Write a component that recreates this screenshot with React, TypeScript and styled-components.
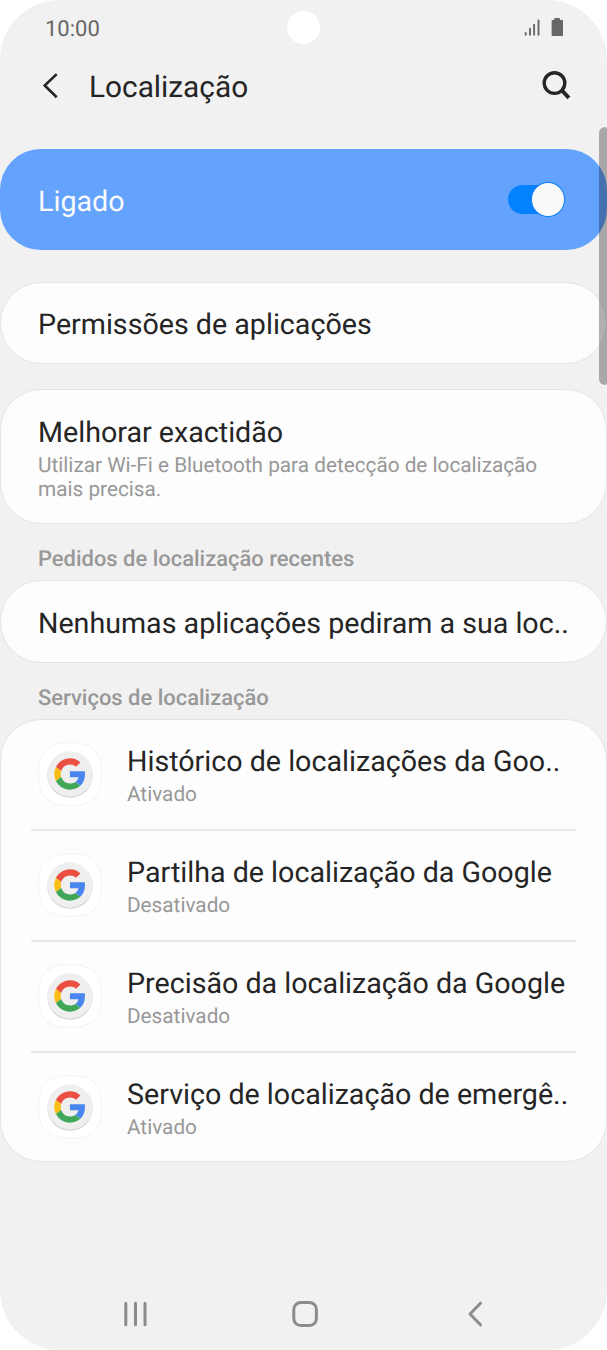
import React from "react";
import styled, { createGlobalStyle } from "styled-components";

const GlobalStyle = createGlobalStyle`
  html, body { margin: 0; padding: 0; background: #fff; }
  * { box-sizing: border-box; }
`;

const Screen = styled.div`
  position: relative;
  display: flex;
  flex-direction: column;
  width: 607px;
  height: 1350px;
  overflow: hidden;
  border-radius: 60px;
  background: #f1f1f1;
  color: #252525;
  font-family: Roboto, "Liberation Sans", sans-serif;
  text-rendering: geometricPrecision;
`;

const StatusBar = styled.div`
  display: flex;
  align-items: center;
  justify-content: space-between;
  height: 56px;
  padding: 0 43px 0 45px;
`;

const Clock = styled.span`
  padding-top: 3px;
  font-size: 22px;
  line-height: 26px;
  color: #666;
`;

const Camera = styled.div`
  position: absolute;
  left: 287px;
  top: 11px;
  width: 33.4px;
  height: 33.4px;
  border-radius: 50%;
  background: #fff;
`;

const TitleBar = styled.header`
  display: flex;
  align-items: center;
  height: 60px;
  padding: 0 35px 0 40px;
`;

const Title = styled.h1`
  flex: 1;
  margin: 3px 0 0 29px;
  font-size: 29.8px;
  font-weight: 400;
  line-height: 36px;
`;

const Content = styled.main`
  display: flex;
  flex-direction: column;
  flex: 1;
  padding-top: 33px;
`;

const Banner = styled.section`
  display: flex;
  align-items: center;
  justify-content: space-between;
  height: 101px;
  margin-bottom: 32px;
  padding: 2px 42px 0 38px;
  border-radius: 41px;
  background: #63a3fd;
  color: #fafafa;
`;

const Card = styled.section<{ $height: number; $gap?: number }>`
  display: flex;
  flex-direction: column;
  justify-content: center;
  height: ${(p) => p.$height}px;
  margin-bottom: ${(p) => p.$gap ?? 0}px;
  padding: 2px 30px 0 37px;
  border: 1px solid #e4e4e4;
  border-radius: 41px;
  background: #fdfdfd;
`;

const Label = styled.div`
  font-size: 28.65px;
  line-height: 36px;
  white-space: nowrap;
`;

const Note = styled.div<{ $lineHeight?: number; $top?: number }>`
  margin-top: ${(p) => p.$top ?? 0}px;
  font-size: 20.75px;
  line-height: ${(p) => p.$lineHeight ?? 24}px;
  white-space: nowrap;
  color: #989898;
`;

const SectionTitle = styled.h2<{ $height: number }>`
  height: ${(p) => p.$height}px;
  margin: 0;
  padding: 22px 38px 0;
  font-size: 21.95px;
  font-weight: 500;
  line-height: 28px;
  color: #989898;
`;

const Track = styled.span`
  display: flex;
  align-items: center;
  justify-content: flex-end;
  width: 57.5px;
  height: 29px;
  margin-top: -2px;
  border-radius: 15px;
  background: #0381fe;
`;

const Thumb = styled.span`
  flex: none;
  width: 34.5px;
  height: 35px;
  border: 1.5px solid #0b7ff3;
  border-radius: 50%;
  background: #fafafa;
`;

const ServiceList = styled.ul`
  height: 443px;
  margin: 0;
  padding: 0 30px;
  list-style: none;
  border: 1px solid #e4e4e4;
  border-radius: 41px;
  background: #fdfdfd;
`;

const ServiceRow = styled.li`
  display: flex;
  align-items: flex-start;
  gap: 25px;
  height: 111px;
  padding: 22px 0 0 7px;
  border-bottom: 2px solid #e8e8e8;

  &:last-child {
    border-bottom: none;
  }

  > svg {
    flex: none;
  }
`;

const ServiceText = styled.div`
  padding-top: 1px;
`;

const NavBar = styled.nav`
  display: flex;
  align-items: center;
  justify-content: space-between;
  height: 72px;
  padding: 0 124px;
`;

const HomeIcon = styled.svg`
  margin-right: 5px;
`;

const ScrollBar = styled.div`
  position: absolute;
  right: 0;
  top: 126.5px;
  width: 7.7px;
  height: 258px;
  border-radius: 6px 2px 2px 6px;
  background: rgba(0, 0, 0, 0.3);
`;

const GoogleIcon = () => (
  <svg width="64" height="64" viewBox="0 0 64 64">
    <path
      d="M32 .6C54 .6 63.4 9 63.4 32S54 63.4 32 63.4.6 55 .6 32 10 .6 32 .6Z"
      fill="#fff"
      stroke="#f3f3f3"
    />
    <circle cx="32" cy="33.2" r="22.6" fill="#cfcfcf" />
    <circle cx="32" cy="32" r="22.7" fill="#efefef" />
    <g transform="translate(16.3 16.3) scale(.653)">
      <path fill="#ea4f41" d="M24 9.5c3.54 0 6.71 1.22 9.21 3.6l6.85-6.85C35.9 2.38 30.47 0 24 0 14.62 0 6.51 5.38 2.56 13.22l7.98 6.19C12.43 13.72 17.74 9.5 24 9.5z" />
      <path fill="#4a86f0" d="M46.98 24.55c0-1.57-.15-3.09-.38-4.55H24v9.02h12.94c-.58 2.96-2.26 5.48-4.78 7.18l7.73 6c4.51-4.18 7.09-10.36 7.09-17.65z" />
      <path fill="#fabd14" d="M10.53 28.59c-.48-1.45-.76-2.99-.76-4.59s.27-3.14.76-4.59l-7.98-6.19C.92 16.46 0 20.12 0 24c0 3.88.92 7.54 2.56 10.78l7.97-6.19z" />
      <path fill="#3fa757" d="M24 48c6.48 0 11.93-2.13 15.89-5.81l-7.73-6c-2.15 1.45-4.92 2.3-8.16 2.3-6.26 0-11.57-4.22-13.47-9.91l-7.98 6.19C6.51 42.62 14.62 48 24 48z" />
    </g>
  </svg>
);

const services = [
  { name: "Histórico de localizações da Goo..", state: "Ativado" },
  { name: "Partilha de localização da Google", state: "Desativado" },
  { name: "Precisão da localização da Google", state: "Desativado" },
  { name: "Serviço de localização de emergê..", state: "Ativado" },
];

export default function App() {
  return (
    <>
      <GlobalStyle />
      <Screen>
        <StatusBar>
          <Clock>10:00</Clock>
          <svg width="40" height="20" viewBox="0 0 40 20">
            <g stroke="#666" strokeWidth="1.9" strokeLinecap="round">
              <path d="M1.7 15v1.8M6 10.8v6M10.1 6.8v10M14.5 2.5v14.3" />
            </g>
            <path fill="#666" d="M31.2 0h3.8q1 0 1 1v1h2q1 0 1 1v14q0 1-1 1h-9.4q-1 0-1-1V3q0-1 1-1h1.6V1q0-1 1-1z" />
          </svg>
        </StatusBar>
        <Camera />
        <TitleBar>
          <svg width="20" height="28" viewBox="0 0 20 28" fill="none" stroke="#252525" strokeWidth="2.6">
            <path d="M16.7 2.1 4.7 13.5 16.7 25.2" />
          </svg>
          <Title>Localização</Title>
          <svg width="32" height="32" viewBox="0 0 32 32" fill="none" stroke="#252525">
            <circle cx="14.5" cy="13.1" r="10.3" strokeWidth="3.4" />
            <path d="m21.6 20.2 7.3 7.6" strokeWidth="3.9" />
          </svg>
        </TitleBar>
        <Content>
          <Banner>
            <Label>Ligado</Label>
            <Track>
              <Thumb />
            </Track>
          </Banner>
          <Card $height={82} $gap={25}>
            <Label>Permissões de aplicações</Label>
          </Card>
          <Card $height={135}>
            <Label>Melhorar exactidão</Label>
            <Note $top={4}>
              Utilizar Wi-Fi e Bluetooth para detecção de localização
              <br />
              mais precisa.
            </Note>
          </Card>
          <SectionTitle $height={56}>Pedidos de localização recentes</SectionTitle>
          <Card $height={83}>
            <Label>Nenhumas aplicações pediram a sua loc..</Label>
          </Card>
          <SectionTitle $height={56}>Serviços de localização</SectionTitle>
          <ServiceList>
            {services.map((s) => (
              <ServiceRow key={s.name}>
                <GoogleIcon />
                <ServiceText>
                  <Label>{s.name}</Label>
                  <Note $lineHeight={32}>{s.state}</Note>
                </ServiceText>
              </ServiceRow>
            ))}
          </ServiceList>
        </Content>
        <NavBar>
          <svg width="24" height="26" viewBox="0 0 24 26" stroke="#8c8c8c" strokeWidth="3" strokeLinecap="round">
            <path d="M1.8 2.2v21.6M11.5 2.2v21.6M21 2.2v21.6" />
          </svg>
          <HomeIcon width="28" height="28" viewBox="0 0 28 28" fill="none" stroke="#8c8c8c" strokeWidth="3">
            <rect x="2.8" y="2.5" width="22.6" height="23" rx="7" />
          </HomeIcon>
          <svg width="16" height="26" viewBox="0 0 16 26" fill="none" stroke="#8c8c8c" strokeWidth="3" strokeLinecap="round" strokeLinejoin="round">
            <path d="M13.5 2.2 3 13l10.5 10.8" />
          </svg>
        </NavBar>
        <ScrollBar />
      </Screen>
    </>
  );
}
